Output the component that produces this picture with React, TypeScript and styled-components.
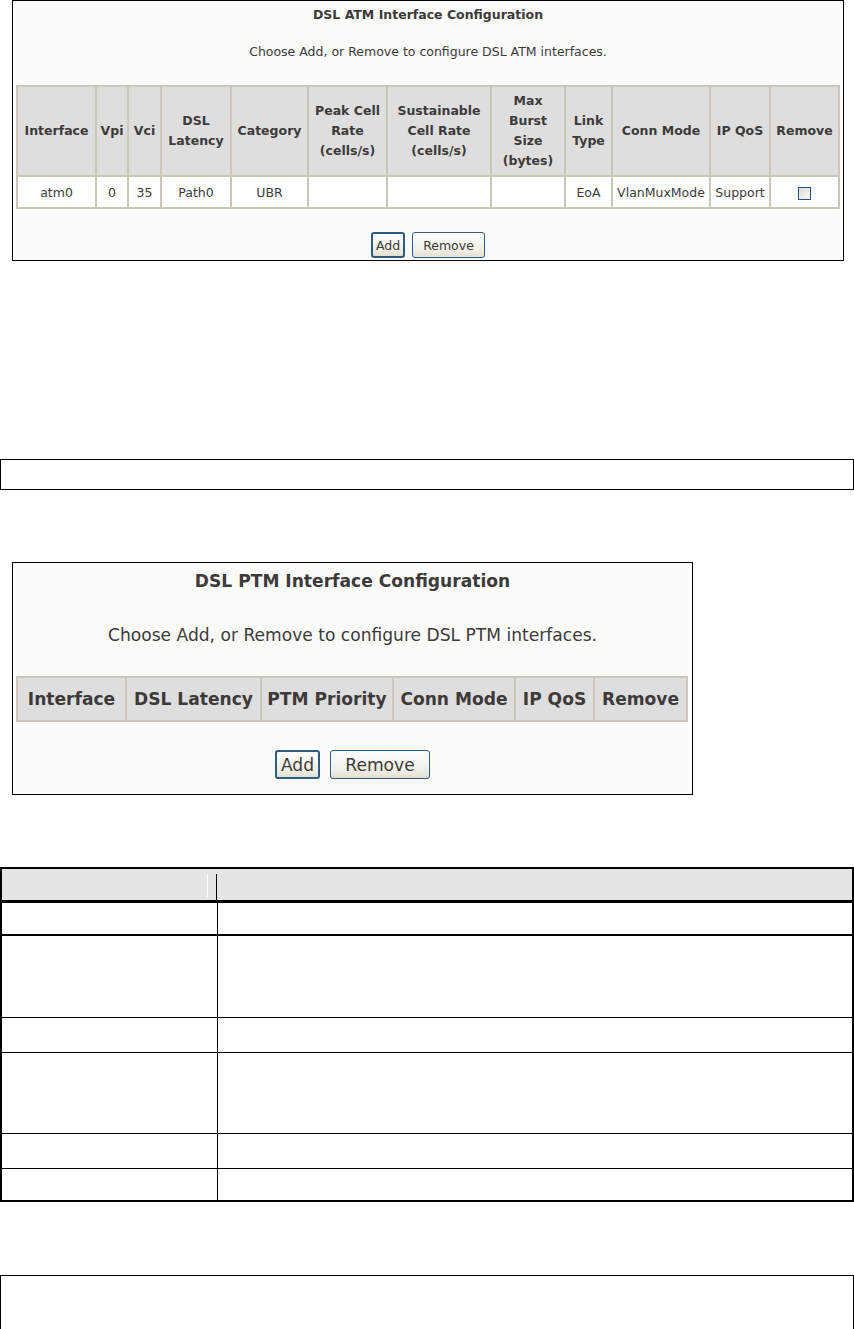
import React from "react";
import styled, { createGlobalStyle } from "styled-components";

type Col = { lines: string[]; w: number };

const atmCols: Col[] = [
	{ lines: ["Interface"], w: 79 },
	{ lines: ["Vpi"], w: 32 },
	{ lines: ["Vci"], w: 33 },
	{ lines: ["DSL", "Latency"], w: 70 },
	{ lines: ["Category"], w: 77 },
	{ lines: ["Peak Cell", "Rate", "(cells/s)"], w: 79 },
	{ lines: ["Sustainable", "Cell Rate", "(cells/s)"], w: 104 },
	{ lines: ["Max", "Burst", "Size", "(bytes)"], w: 74 },
	{ lines: ["Link", "Type"], w: 47 },
	{ lines: ["Conn Mode"], w: 98 },
	{ lines: ["IP QoS"], w: 60 },
	{ lines: ["Remove"], w: 69 },
];

const atmRow = ["atm0", "0", "35", "Path0", "UBR", "", "", "", "EoA", "VlanMuxMode", "Support"];

const ptmCols: Col[] = [
	{ lines: ["Interface"], w: 109 },
	{ lines: ["DSL Latency"], w: 135 },
	{ lines: ["PTM Priority"], w: 132 },
	{ lines: ["Conn Mode"], w: 122 },
	{ lines: ["IP QoS"], w: 79 },
	{ lines: ["Remove"], w: 93 },
];

// heights of the empty rows in the parameter table below
const docRows = [33, 83, 35, 81, 35, 32];

const App = () => {
	return (
		<Page>
			<GlobalStyle />
			<Panel $w={832} $fs={12.5} $pb={2} $mt={0}>
				<PanelTitle $mt={4} $lh={20}>
					DSL ATM Interface Configuration
				</PanelTitle>
				<PanelNote $mt={17} $lh={20}>
					Choose Add, or Remove to configure DSL ATM interfaces.
				</PanelNote>
				<ConfigTable $mt={23}>
					<colgroup>
						{atmCols.map((c, i) => (
							<col key={i} style={{ width: c.w }} />
						))}
					</colgroup>
					<thead>
						<tr>
							{atmCols.map((c, i) => (
								<HeadCell key={i} $h={90} $lh={20}>
									{c.lines.map((l, j) => (
										<div key={j}>{l}</div>
									))}
								</HeadCell>
							))}
						</tr>
					</thead>
					<tbody>
						<tr>
							{atmRow.map((v, i) => (
								<DataCell key={i}>{v}</DataCell>
							))}
							<DataCell>
								<Check />
							</DataCell>
						</tr>
					</tbody>
				</ConfigTable>
				<ButtonRow $mt={23} $gap={7}>
					<Button $w={34} $h={26} $strong>
						Add
					</Button>
					<Button $w={73} $h={26}>
						Remove
					</Button>
				</ButtonRow>
			</Panel>

			<EmptyBox $h={31} $mt={198} />

			<Panel $w={681} $fs={17.1} $pb={15} $mt={72}>
				<PanelTitle $mt={5} $lh={27}>
					DSL PTM Interface Configuration
				</PanelTitle>
				<PanelNote $mt={27} $lh={27}>
					Choose Add, or Remove to configure DSL PTM interfaces.
				</PanelNote>
				<ConfigTable $mt={27}>
					<colgroup>
						{ptmCols.map((c, i) => (
							<col key={i} style={{ width: c.w }} />
						))}
					</colgroup>
					<thead>
						<tr>
							{ptmCols.map((c, i) => (
								<HeadCell key={i} $h={44} $lh={27}>
									{c.lines[0]}
								</HeadCell>
							))}
						</tr>
					</thead>
				</ConfigTable>
				<ButtonRow $mt={28} $gap={10}>
					<Button $w={45} $h={29} $strong>
						Add
					</Button>
					<Button $w={100} $h={29}>
						Remove
					</Button>
				</ButtonRow>
			</Panel>

			<DocTable>
				<colgroup>
					<col style={{ width: 216 }} />
					<col />
				</colgroup>
				<thead>
					<tr>
						<DocHead $first />
						<DocHead />
					</tr>
				</thead>
				<tbody>
					{docRows.map((h, i) => (
						<DocRow key={i} $h={h} $thick={i === 0}>
							<DocCell />
							<DocCell />
						</DocRow>
					))}
				</tbody>
			</DocTable>

			<EmptyBox $h={55} $mt={73} />
		</Page>
	);
};

export default App;

const GlobalStyle = createGlobalStyle`
	html, body {
		margin: 0;
		padding: 0;
		background: #ffffff;
	}
	body {
		font-family: "DejaVu Sans", Verdana, sans-serif;
	}
`;

const Page = styled.div`
	width: 854px;
	display: flex;
	flex-direction: column;
`;

const Panel = styled.div<{ $w: number; $fs: number; $pb: number; $mt: number }>`
	width: ${(p) => p.$w}px;
	margin: ${(p) => p.$mt}px 0 0 12px;
	box-sizing: border-box;
	border: 1px solid #000;
	background-color: #fbfbfa;
	padding: 0 3px ${(p) => p.$pb}px 3px;
	display: flex;
	flex-direction: column;
	align-items: center;
	font-size: ${(p) => p.$fs}px;
	color: #3d3a3a;
`;

const PanelTitle = styled.div<{ $mt: number; $lh: number }>`
	margin-top: ${(p) => p.$mt}px;
	line-height: ${(p) => p.$lh}px;
	font-weight: bold;
`;

const PanelNote = styled.div<{ $mt: number; $lh: number }>`
	margin-top: ${(p) => p.$mt}px;
	line-height: ${(p) => p.$lh}px;
`;

const ConfigTable = styled.table<{ $mt: number }>`
	align-self: flex-start;
	margin-top: ${(p) => p.$mt}px;
	table-layout: fixed;
	border-collapse: collapse;
	border: 2px solid #cbc8b9;
`;

const HeadCell = styled.th<{ $h: number; $lh: number }>`
	height: ${(p) => p.$h}px;
	box-sizing: border-box;
	padding: 0;
	border: 2px solid #cbc8b9;
	background-color: #dedede;
	line-height: ${(p) => p.$lh}px;
	font-weight: bold;
	text-align: center;
	vertical-align: middle;
	white-space: nowrap;
`;

const DataCell = styled.td`
	height: 32px;
	box-sizing: border-box;
	padding: 0;
	border: 2px solid #cbc8b9;
	background-color: #ffffff;
	text-align: center;
	vertical-align: middle;
	white-space: nowrap;
`;

const Check = styled.span`
	display: inline-block;
	width: 11px;
	height: 11px;
	border: 1px solid #1c5180;
	background: linear-gradient(135deg, #dcdcd7, #fbfbf9);
	vertical-align: middle;
`;

const ButtonRow = styled.div<{ $mt: number; $gap: number }>`
	margin-top: ${(p) => p.$mt}px;
	display: flex;
	gap: ${(p) => p.$gap}px;
`;

const Button = styled.div<{ $w: number; $h: number; $strong?: boolean }>`
	width: ${(p) => p.$w}px;
	height: ${(p) => p.$h}px;
	box-sizing: border-box;
	display: flex;
	align-items: center;
	justify-content: center;
	border: ${(p) => (p.$strong ? "2px" : "1px")} solid #2d5b86;
	border-radius: 3px;
	background: linear-gradient(#ffffff, #f1efe6 70%, #e3e0d2);
	color: #3d3a3a;
`;

const EmptyBox = styled.div<{ $h: number; $mt: number }>`
	margin-top: ${(p) => p.$mt}px;
	width: 854px;
	height: ${(p) => p.$h}px;
	box-sizing: border-box;
	border: 1px solid #000;
`;

const DocTable = styled.table`
	margin-top: 72px;
	width: 854px;
	table-layout: fixed;
	border-collapse: collapse;
	border: 2px solid #000;
`;

/* the header divider stops short of the top rule, as in the source document */
const DocHead = styled.th<{ $first?: boolean }>`
	height: 31px;
	padding: 0;
	border-bottom: 3px solid #000;
	background: ${(p) =>
		p.$first
			? "linear-gradient(#000, #000) right bottom / 1px calc(100% - 5px) no-repeat, linear-gradient(#fff, #fff) 205px 5px / 1px 23px no-repeat, #e5e5e5"
			: "#e5e5e5"};
`;

const DocRow = styled.tr<{ $h: number; $thick: boolean }>`
	height: ${(p) => p.$h}px;
	border-bottom: ${(p) => (p.$thick ? "2px" : "1px")} solid #000;
`;

const DocCell = styled.td`
	padding: 0;
	border-right: 1px solid #000;
`;
